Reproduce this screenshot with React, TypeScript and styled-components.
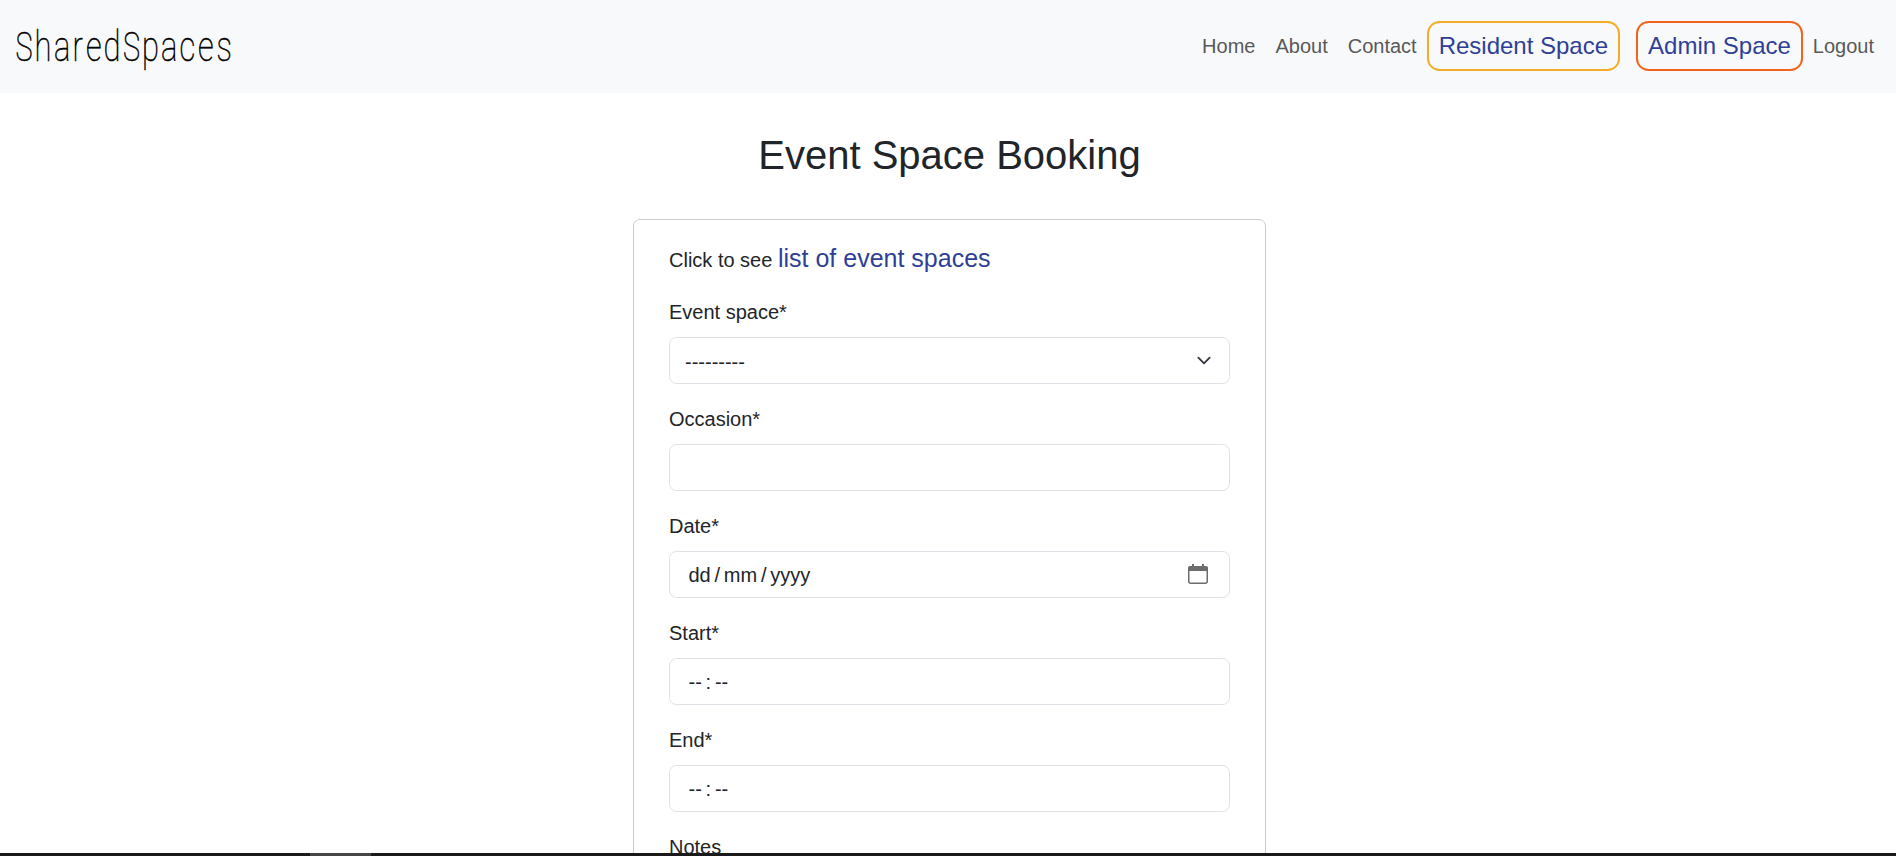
import React from "react";
import styled, { createGlobalStyle } from "styled-components";

const GlobalStyle = createGlobalStyle`
  *, *::before, *::after { box-sizing: border-box; }
  body {
    margin: 0;
    background: #fff;
    color: #212529;
    font-family: "Liberation Sans", Arial, sans-serif;
    font-size: 20px;
    line-height: 1.5;
    overflow: hidden;
  }
`;

const Page = styled.div`
  display: flex;
  flex-direction: column;
  height: 856px;
`;

const Navbar = styled.header`
  flex: none;
  display: flex;
  align-items: center;
  justify-content: space-between;
  height: 93px;
  padding: 0 12px 1px 15px;
  background: #f8f9fb;
`;

const Brand = styled.a`
  display: flex;
  height: 92px;
  svg { display: block; }
  text {
    font-family: Roboto, "Liberation Sans", sans-serif;
    font-weight: 100;
    fill: #000;
    stroke: #000;
    stroke-width: 0.6px;
  }
`;

const Nav = styled.nav`
  display: flex;
  align-items: center;
`;

const NavLink = styled.a`
  padding: 0 10px;
  color: #58595a;
  text-decoration: none;
`;

const SpaceLink = styled.a<{ $tone: string; $gap?: number }>`
  display: flex;
  align-items: center;
  height: 50px;
  padding: 0 10px;
  margin-right: ${(p) => p.$gap ?? 0}px;
  border: 2px solid ${(p) => p.$tone};
  border-radius: 12.5px;
  color: #2f3f98;
  font-size: 24px;
  text-decoration: none;
`;

const Main = styled.main`
  flex: 1;
  min-height: 0;
  overflow: hidden;
  display: flex;
  flex-direction: column;
  align-items: center;
  padding: 38px 0 0 3px;
`;

const Title = styled.h1`
  margin: 0 0 40px;
  font-size: 40px;
  font-weight: 400;
  line-height: 48px;
`;

const Card = styled.form`
  flex: none;
  width: 633px;
  height: 800px;
  padding: 19px 35px;
  border: 1px solid #cbcccd;
  border-radius: 7px;
`;

const Intro = styled.p`
  margin: 0 0 20px;
  height: 38px;
  line-height: 38px;
  a { color: #2f3f98; font-size: 25px; text-decoration: none; }
`;

const Field = styled.div`
  margin-bottom: 20px;
`;

const Label = styled.label`
  display: block;
  margin-bottom: 10px;
  line-height: 30px;
`;

const Control = styled.div`
  display: flex;
  align-items: center;
  justify-content: space-between;
  height: 47px;
  padding: 2px 15px 0;
  border: 1px solid #dee2e6;
  border-radius: 7.5px;
  svg { display: block; margin-top: -2px; }
`;

const PickerControl = styled(Control)`
  padding: 0 21px 0 18.5px;
`;

const Segments = styled.span`
  display: flex;
  gap: 3.75px;
`;

const BottomEdge = styled.div`
  flex: none;
  height: 3px;
  padding-left: 310px;
  background: #1b1a1b;
`;

const ActiveMark = styled.div`
  width: 61px;
  height: 3px;
  background: #474647;
`;

const Chevron = () => (
  <svg width="20" height="15" viewBox="0 0 16 16" fill="none" stroke="#343a40" strokeWidth="2" strokeLinecap="round" strokeLinejoin="round">
    <path d="m2 5 6 6 6-6" />
  </svg>
);

const Calendar = () => (
  <svg width="20" height="20" viewBox="0 0 20 20">
    <rect x="0.75" y="2.75" width="18.5" height="16.5" rx="2" fill="none" stroke="#6b6c6e" strokeWidth="1.5" />
    <path fill="#6b6c6e" d="M0 7V4.5Q0 2 2.5 2H4V0h2v2h8V0h2v2h1.5Q20 2 20 4.5V7z" />
  </svg>
);

const LOGO_SCALE = 0.72;
const at = (xs: number[]) => xs.map((x) => x / LOGO_SCALE).join(" ");

const Logo = () => (
  <svg width="220" height="92" viewBox="0 0 220 92">
    <g transform={`scale(${LOGO_SCALE} 1)`}>
      <text y="61">
        <tspan fontSize="40" x={at([0.5])}>S</tspan>
        <tspan fontSize="43" x={at([19.5, 39, 57.5, 71, 88.5])}>hared</tspan>
        <tspan fontSize="40" x={at([108])}>S</tspan>
        <tspan fontSize="43" x={at([127, 146, 164.5, 183, 201.5])}>paces</tspan>
      </text>
    </g>
  </svg>
);

const DateParts = ({ parts }: { parts: string[] }) => (
  <Segments>
    {parts.map((part, i) => (
      <span key={i}>{part}</span>
    ))}
  </Segments>
);

export default function App() {
  return (
    <Page>
      <GlobalStyle />
      <Navbar>
        <Brand><Logo /></Brand>
        <Nav>
          <NavLink>Home</NavLink>
          <NavLink>About</NavLink>
          <NavLink>Contact</NavLink>
          <SpaceLink $tone="#f5ad29" $gap={16}>Resident Space</SpaceLink>
          <SpaceLink $tone="#f3631c">Admin Space</SpaceLink>
          <NavLink>Logout</NavLink>
        </Nav>
      </Navbar>
      <Main>
        <Title>Event Space Booking</Title>
        <Card>
          <Intro>Click to see <a>list of event spaces</a></Intro>
          <Field>
            <Label>Event space*</Label>
            <Control><span>---------</span><Chevron /></Control>
          </Field>
          <Field>
            <Label>Occasion*</Label>
            <Control />
          </Field>
          <Field>
            <Label>Date*</Label>
            <PickerControl>
              <DateParts parts={["dd", "/", "mm", "/", "yyyy"]} />
              <Calendar />
            </PickerControl>
          </Field>
          <Field>
            <Label>Start*</Label>
            <PickerControl><DateParts parts={["--", ":", "--"]} /></PickerControl>
          </Field>
          <Field>
            <Label>End*</Label>
            <PickerControl><DateParts parts={["--", ":", "--"]} /></PickerControl>
          </Field>
          <Field>
            <Label>Notes</Label>
          </Field>
        </Card>
      </Main>
      <BottomEdge><ActiveMark /></BottomEdge>
    </Page>
  );
}
